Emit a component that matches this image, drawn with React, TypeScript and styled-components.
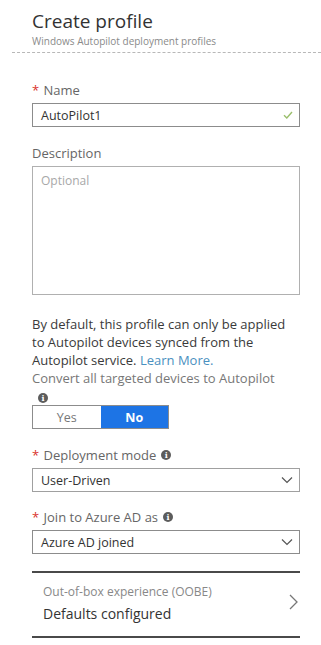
import React from 'react';
import styled, { createGlobalStyle } from 'styled-components';

const GlobalStyle = createGlobalStyle`
  html, body {
    margin: 0;
    padding: 0;
    background: #ffffff;
  }
  body {
    font-family: 'Open Sans', 'Noto Sans', sans-serif;
    color: #333;
  }
`;

const Page = styled.div`
  width: 321px;
  height: 645px;
  overflow: hidden;
`;

const Header = styled.header`
  margin-left: 12px;
  padding: 8px 0 4px 20px;
  border-bottom: 1px dashed #b8b8b8;
`;

const Title = styled.h1`
  margin: 0;
  font-size: 19px;
  line-height: 26px;
  font-weight: 400;
  color: #333;
`;

const Subtitle = styled.div`
  font-size: 10px;
  line-height: 14px;
  color: #8a8a8a;
`;

const Body = styled.div`
  padding: 0 21px 0 32px;
`;

const Field = styled.div<{ $top: number }>`
  margin-top: ${(p) => p.$top}px;
`;

const Label = styled.div`
  display: flex;
  align-items: center;
  gap: 5px;
  font-size: 13px;
  line-height: 16px;
  color: #666;
  margin-bottom: 5px;
`;

const Star = styled.span`
  color: #d9322b;
  margin-right: 1px;
`;

const InputBox = styled.div<{ $border?: string }>`
  height: 24px;
  box-sizing: border-box;
  border: 1px solid ${(p) => p.$border || '#8c8c8c'};
  display: flex;
  align-items: center;
  justify-content: space-between;
  padding: 0 6px 0 8px;
  font-size: 12.5px;
  color: #333;
`;

const TextArea = styled.div`
  height: 129px;
  box-sizing: border-box;
  border: 1px solid #b0b0b0;
  padding: 5px 8px;
  font-size: 12px;
  color: #a8a8a8;
`;

const Paragraph = styled.p`
  margin: 20px 0 0;
  font-size: 13px;
  line-height: 18px;
  color: #3a3a3a;
  white-space: nowrap;
`;

const Link = styled.span`
  color: #4a90c0;
`;

const Muted = styled.span`
  color: #777;
`;

const InfoIcon = styled.span`
  display: inline-flex;
  align-items: center;
  justify-content: center;
  width: 10px;
  height: 10px;
  border-radius: 50%;
  background: #5c5c5c;
  color: #fff;
  font-size: 8px;
  font-weight: 700;
  line-height: 1;
  font-family: 'DejaVu Serif', serif;
`;

const InfoRow = styled.div`
  margin-top: 5px;
  padding-left: 6px;
  height: 12px;
  display: flex;
  align-items: center;
`;

const Toggle = styled.div`
  margin-top: 1px;
  display: flex;
  width: 137px;
  height: 24px;
  box-sizing: border-box;
  border: 1px solid #8c8c8c;
`;

const ToggleOption = styled.div<{ $active?: boolean }>`
  flex: 1;
  display: flex;
  align-items: center;
  justify-content: center;
  font-size: 12.5px;
  font-weight: ${(p) => (p.$active ? 700 : 400)};
  background: ${(p) => (p.$active ? '#1d74e5' : '#fff')};
  color: ${(p) => (p.$active ? '#fff' : '#777')};
`;

const Summary = styled.div`
  margin-top: 17px;
  border-top: 2px solid #4a4a4a;
  border-bottom: 2px solid #4a4a4a;
  height: 67px;
  box-sizing: border-box;
  display: flex;
  align-items: flex-start;
  justify-content: space-between;
  padding: 11px 2px 0 11px;
`;

const SummaryText = styled.div`
  display: flex;
  flex-direction: column;
`;

const SummaryLabel = styled.div`
  font-size: 12px;
  line-height: 16px;
  color: #888;
`;

const SummaryValue = styled.div`
  margin-top: 4px;
  font-size: 14px;
  line-height: 20px;
  color: #333;
`;

const ArrowWrap = styled.div`
  margin-top: 9px;
`;

const Check = () => (
  <svg width="10" height="8" viewBox="0 0 10 8">
    <path d="M1 4.2 L3.8 7 L9 1" fill="none" stroke="#9bbf6c" strokeWidth="1.4" />
  </svg>
);

const Chevron = () => (
  <svg width="12" height="8" viewBox="0 0 12 8">
    <path d="M1 1.5 L6 6.5 L11 1.5" fill="none" stroke="#555" strokeWidth="1.2" />
  </svg>
);

const ChevronRight = () => (
  <svg width="9" height="16" viewBox="0 0 9 16">
    <path d="M1 1 L8 8 L1 15" fill="none" stroke="#777" strokeWidth="1.3" />
  </svg>
);

const App = () => {
  return (
    <Page>
      <GlobalStyle />
      <Header>
        <Title>Create profile</Title>
        <Subtitle>Windows Autopilot deployment profiles</Subtitle>
      </Header>
      <Body>
        <Field $top={29}>
          <Label>
            <span>
              <Star>*</Star> Name
            </span>
          </Label>
          <InputBox>
            <span>AutoPilot1</span>
            <Check />
          </InputBox>
        </Field>
        <Field $top={18}>
          <Label>Description</Label>
          <TextArea>Optional</TextArea>
        </Field>
        <Paragraph>
          By default, this profile can only be applied
          <br />
          to Autopilot devices synced from the
          <br />
          Autopilot service. <Link>Learn More.</Link>
          <br />
          <Muted>Convert all targeted devices to Autopilot</Muted>
        </Paragraph>
        <InfoRow>
          <InfoIcon>i</InfoIcon>
        </InfoRow>
        <Toggle>
          <ToggleOption>Yes</ToggleOption>
          <ToggleOption $active>No</ToggleOption>
        </Toggle>
        <Field $top={18}>
          <Label>
            <span>
              <Star>*</Star> Deployment mode
            </span>
            <InfoIcon>i</InfoIcon>
          </Label>
          <InputBox $border="#a0a0a0">
            <span>User-Driven</span>
            <Chevron />
          </InputBox>
        </Field>
        <Field $top={17}>
          <Label>
            <span>
              <Star>*</Star> Join to Azure AD as
            </span>
            <InfoIcon>i</InfoIcon>
          </Label>
          <InputBox>
            <span>Azure AD joined</span>
            <Chevron />
          </InputBox>
        </Field>
        <Summary>
          <SummaryText>
            <SummaryLabel>Out-of-box experience (OOBE)</SummaryLabel>
            <SummaryValue>Defaults configured</SummaryValue>
          </SummaryText>
          <ArrowWrap>
            <ChevronRight />
          </ArrowWrap>
        </Summary>
      </Body>
    </Page>
  );
};

export default App;
